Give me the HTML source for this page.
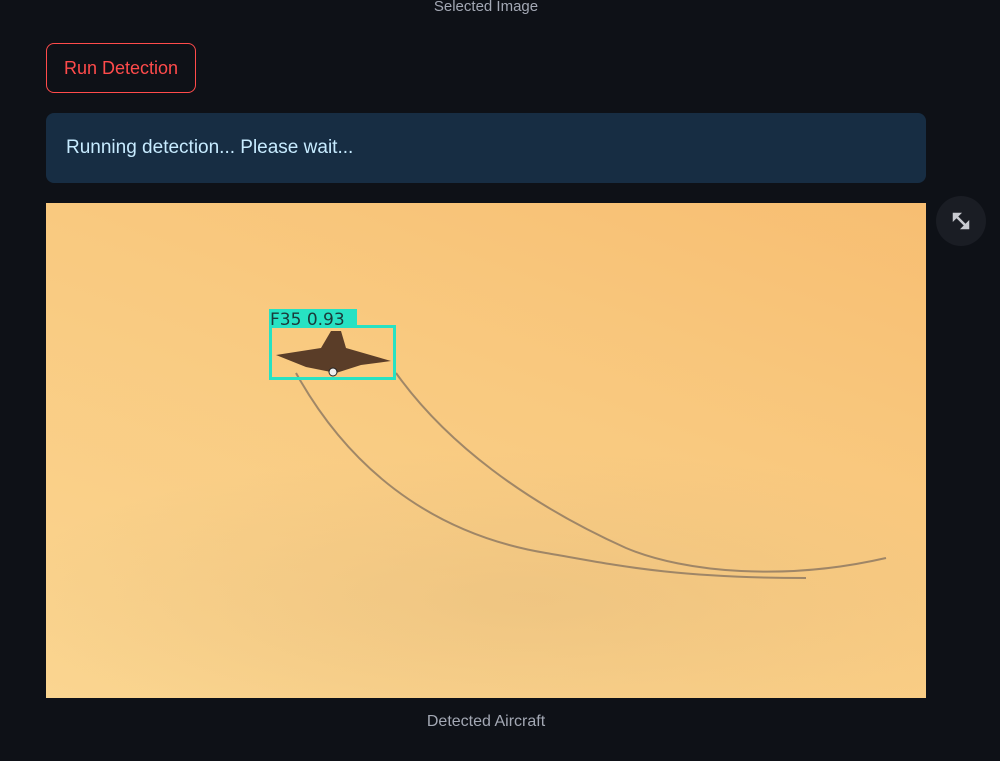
<!DOCTYPE html>
<html><head><style>
body{margin:0;width:1000px;height:761px;background:#0e1117;overflow:hidden;font-family:"Liberation Sans",sans-serif;position:relative}
.t{position:absolute;color:#a3a8b4;font-size:15px;text-align:center}
.btn{position:absolute;left:46px;top:43px;border:1px solid #ff4b4b;border-radius:8px;color:#ff4b4b;font-size:18px;line-height:48px;text-align:center;box-sizing:border-box;width:150px;height:50px}
.info{position:absolute;left:46px;top:113px;width:880px;height:70px;background:#172d43;border-radius:8px;color:#c7ebff;font-size:19px;line-height:70px;padding-left:20px;box-sizing:border-box}
.img{position:absolute;left:46px;top:203px;width:880px;height:495px;background:radial-gradient(ellipse 60% 30% at 55% 80%,rgba(220,180,120,.35),transparent),linear-gradient(200deg,#f7be72 0%,#f9c97f 40%,#fad590 100%);overflow:hidden}
.fs{position:absolute;left:936px;top:196px;width:50px;height:50px;border-radius:50%;background:#1a1d24}
</style></head><body>
<div class="t" style="left:0;width:972px;top:-2px">Selected Image</div>
<div class="btn">Run Detection</div>
<div class="info">Running detection... Please wait...</div>
<div class="img">
<svg width="880" height="495" style="position:absolute;left:0;top:0">
<path d="M250 170 C300 260 380 330 500 350 C560 360 620 375 760 375" stroke="#8a7560" stroke-width="2" fill="none" opacity=".8"/>
<path d="M350 170 C400 240 480 300 580 345 C640 370 740 378 840 355" stroke="#8a7560" stroke-width="2" fill="none" opacity=".8"/>
<rect x="224.5" y="123.5" width="124" height="52" fill="none" stroke="#27e2c3" stroke-width="3"/>
<rect x="223" y="106" width="88" height="17" fill="#27e2c3"/>
<text x="224" y="122" font-family="DejaVu Sans,sans-serif" font-size="17" fill="#1a3a3a">F35 0.93</text>
<path d="M230 152 L275 145 L285 128 L295 128 L300 145 L345 158 L315 162 L290 170 L260 164 Z" fill="#5a3d28"/>
<circle cx="287" cy="169" r="4" fill="#eee" stroke="#222"/>
</svg>
</div>
<div class="fs"><svg width="50" height="50"><path d="M18 18l5 0-5 5z M32 32l-5 0 5-5z M18 18l14 14" stroke="#c8cad0" stroke-width="2.5" fill="#c8cad0"/></svg></div>
<div class="t" style="left:46px;width:880px;top:713px;font-size:16px">Detected Aircraft</div>
</body></html>
